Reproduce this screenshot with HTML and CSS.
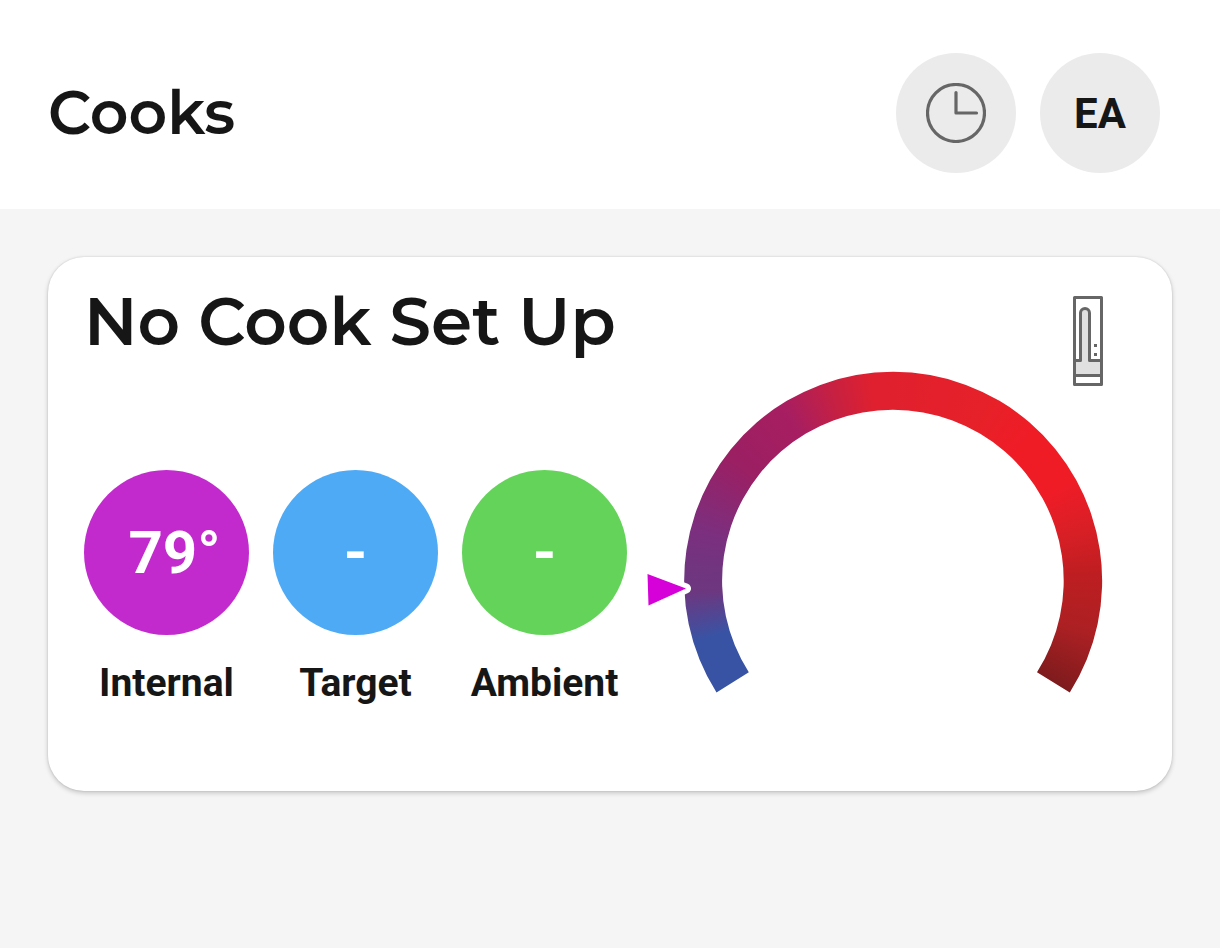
FILE: index.html
```html
<!DOCTYPE html>
<html lang="en">
<head>
<meta charset="utf-8">
<meta name="viewport" content="width=device-width, initial-scale=1">
<title>Cooks</title>
<link rel="stylesheet" href="styles.css">
</head>
<body>
<header class="topbar">
  <h1 class="topbar-title">Cooks</h1>
  <div class="actions">
    <button class="round-button" type="button" aria-label="History">
      <svg class="clock" viewBox="0 0 60 60" aria-hidden="true">
        <circle cx="30" cy="30" r="28.5"/>
        <path d="M30 9.500V30H50.500"/>
      </svg>
    </button>
    <button class="round-button" type="button">EA</button>
  </div>
</header>
<main class="content">
  <section class="card">
    <div class="card-head">
      <h2 class="card-title">No Cook Set Up</h2>
      <svg class="probe" viewBox="0 0 30 90" aria-hidden="true">
        <path class="probe-fill" d="M2 65H8V17a4.500 4.500 0 0 1 9 0V65H28V80H2z"/>
        <path class="probe-line" d="M1.500 1.500H28.500V88.500H1.500zM1.500 64.500H7.500V17a4.500 4.500 0 0 1 9 0V64.500H28.500M1.500 79.500H28.500"/>
        <path class="probe-dots" d="M21 48h3v3h-3zM21 57h3v3h-3z"/>
      </svg>
    </div>
    <div class="card-body">
      <dl class="readings">
        <div class="reading">
          <dt class="label">Internal</dt>
          <dd class="value internal">79°</dd>
        </div>
        <div class="reading">
          <dt class="label">Target</dt>
          <dd class="value target">-</dd>
        </div>
        <div class="reading">
          <dt class="label">Ambient</dt>
          <dd class="value ambient">-</dd>
        </div>
      </dl>
      <svg class="gauge" viewBox="0 0 458 323" role="img" aria-label="Temperature gauge">
        <defs>
          <clipPath id="arc">
            <path d="M71.500 321.500A209 209 0 1 1 424.800 321.500L392 301.300A170.800 170.800 0 1 0 103.800 301.300z"/>
          </clipPath>
        </defs>
        <g clip-path="url(#arc)">
          <foreignObject x="38" y="0" width="420" height="420">
            <div class="gauge-colors"></div>
          </foreignObject>
        </g>
        <path class="pointer" d="M2.500 203L3.500 234.500L41 217.500z"/>
      </svg>
    </div>
  </section>
</main>
</body>
</html>
```
FILE: styles.css
```css
* {
  box-sizing: border-box;
}

body {
  margin: 0;
  min-height: 100vh;
  background: #f5f5f5;
  color: #161616;
  font-family: Roboto, "Liberation Sans", sans-serif;
}

.topbar {
  display: flex;
  align-items: center;
  justify-content: space-between;
  padding: 53px 60px 36px 48px;
  background: #fff;
}

.topbar-title,
.card-title {
  margin: 0;
  font-family: Montserrat, Inter, sans-serif;
  font-weight: 600;
}

.topbar-title {
  font-size: 60px;
  line-height: 76px;
}

.card-title {
  font-size: 66px;
  line-height: 52px;
  white-space: nowrap;
}

.actions {
  display: flex;
  gap: 24px;
}

.round-button {
  display: flex;
  align-items: center;
  justify-content: center;
  width: 120px;
  height: 120px;
  padding: 0;
  border: 0;
  border-radius: 50%;
  background: #ebebeb;
  color: #161616;
  font: 700 42px Roboto, sans-serif;
}

.clock {
  width: 60px;
  fill: none;
  stroke: #666;
  stroke-width: 3.2;
  stroke-linecap: round;
  stroke-linejoin: round;
}

.content {
  padding: 48px;
}

.card {
  padding: 39px 69px 97px 36px;
  border-radius: 36px;
  background: #fff;
  box-shadow: 0 2px 5px rgba(0, 0, 0, 0.2), 0 0 2px rgba(0, 0, 0, 0.14);
}

.card-head {
  display: flex;
  align-items: flex-start;
  justify-content: space-between;
  height: 75px;
}

.probe {
  width: 30px;
  height: 90px;
}

.probe-fill {
  fill: #e0e0e0;
}

.probe-line {
  fill: none;
  stroke: #666;
  stroke-width: 3;
  stroke-linejoin: round;
}

.probe-dots {
  fill: #666;
}

.card-body {
  display: flex;
  align-items: flex-end;
  gap: 18px;
}

.readings {
  display: flex;
  flex: none;
  gap: 24px;
  margin: 0 0 -13px;
}

.reading {
  display: flex;
  flex-direction: column-reverse;
  align-items: center;
  gap: 24px;
  width: 165px;
}

.label {
  font-size: 39px;
  font-weight: 700;
  line-height: 48px;
}

.value {
  display: flex;
  align-items: center;
  justify-content: center;
  width: 165px;
  height: 165px;
  margin: 0;
  border-radius: 50%;
  color: #fff;
  font-size: 60px;
  font-weight: 700;
}

.internal {
  padding-left: 16px;
  background: #c32ace;
}

.target {
  background: #4faaf6;
}

.ambient {
  background: #63d459;
}

.gauge {
  display: block;
  flex: 1;
  min-width: 0;
  max-width: 600px;
}

.gauge-colors {
  width: 420px;
  height: 420px;
  background: conic-gradient(from 180deg,
    #3953a4 0deg, #3953a4 73deg, #6d377f 87deg, #72347f 95deg, #7c2f7e 105deg,
    #9b1f63 127deg, #a71e61 148deg, #c42044 161deg, #e0202f 174deg,
    #e4202b 198deg, #e62129 207deg, #ef1c26 223deg, #ef1c26 241deg,
    #d81f26 255deg, #be1e21 268deg, #ab2023 285deg, #7f1b1d 302deg);
}

.pointer {
  fill: #d600d9;
  stroke: #fff;
  stroke-width: 10;
  stroke-linejoin: round;
  paint-order: stroke;
}
```
